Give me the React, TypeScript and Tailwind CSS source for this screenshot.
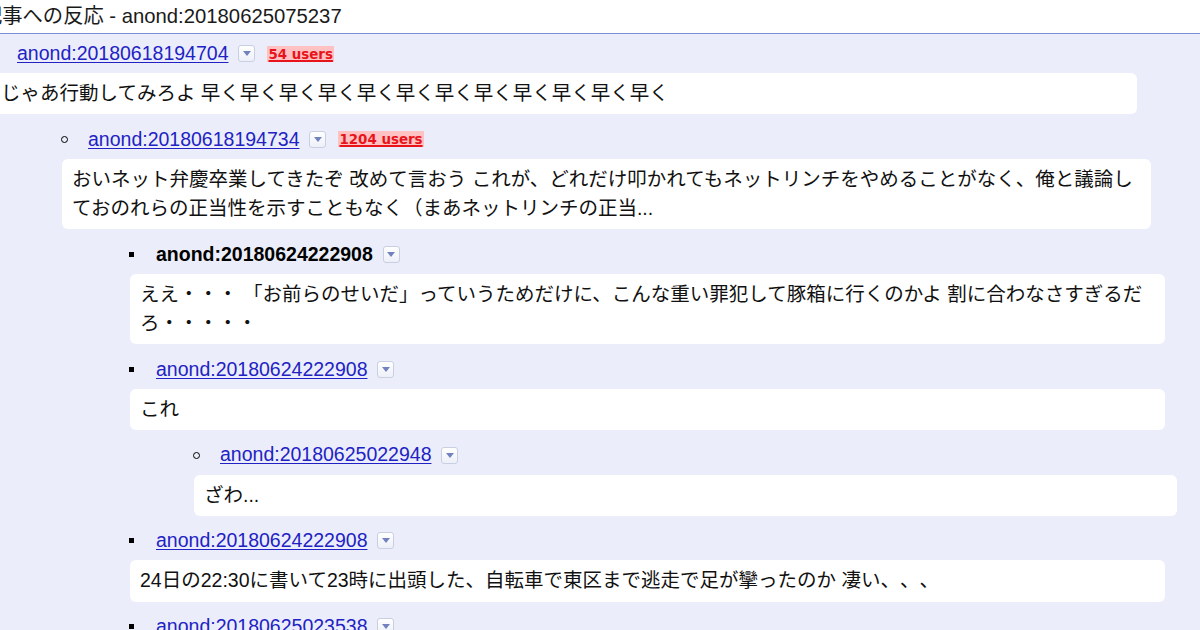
import React from "react";

type Item = {
  ml: string;
  w: string;
  bullet: "none" | "circle" | "square";
  label: string;
  bold?: boolean;
  users?: string;
  lines: string[];
};

const items: Item[] = [
  {
    ml: "ml-[-9px]",
    w: "w-[1146px]",
    bullet: "none",
    label: "anond:20180618194704",
    users: "54 users",
    lines: ["じゃあ行動してみろよ 早く早く早く早く早く早く早く早く早く早く早く早く"],
  },
  {
    ml: "ml-[62px]",
    w: "w-[1089px]",
    bullet: "circle",
    label: "anond:20180618194734",
    users: "1204 users",
    lines: [
      "おいネット弁慶卒業してきたぞ 改めて言おう これが、どれだけ叩かれてもネットリンチをやめることがなく、俺と議論し",
      "ておのれらの正当性を示すこともなく（まあネットリンチの正当...",
    ],
  },
  {
    ml: "ml-[130px]",
    w: "w-[1035px]",
    bullet: "square",
    label: "anond:20180624222908",
    bold: true,
    lines: [
      "ええ・・・ 「お前らのせいだ」っていうためだけに、こんな重い罪犯して豚箱に行くのかよ 割に合わなさすぎるだ",
      "ろ・・・・・",
    ],
  },
  {
    ml: "ml-[130px]",
    w: "w-[1035px]",
    bullet: "square",
    label: "anond:20180624222908",
    lines: ["これ"],
  },
  {
    ml: "ml-[194px]",
    w: "w-[983px]",
    bullet: "circle",
    label: "anond:20180625022948",
    lines: ["ざわ..."],
  },
  {
    ml: "ml-[130px]",
    w: "w-[1035px]",
    bullet: "square",
    label: "anond:20180624222908",
    lines: ["24日の22:30に書いて23時に出頭した、自転車で東区まで逃走で足が攣ったのか 凄い、、、"],
  },
  {
    ml: "ml-[130px]",
    w: "w-[1035px]",
    bullet: "square",
    label: "anond:20180625023538",
    lines: [],
  },
];

function DropButton() {
  return (
    <span className="ml-[10px] inline-flex h-[17px] w-[17px] shrink-0 items-center justify-center rounded-[3px] border border-[#c9cfe3] bg-gradient-to-b from-white to-[#eef0f8]">
      <svg width="8" height="5" viewBox="0 0 8 5">
        <polygon points="0,0 8,0 4,5" fill="#7282c0" />
      </svg>
    </span>
  );
}

function Bullet({ kind }: { kind: Item["bullet"] }) {
  return (
    <span className="ml-[-1px] flex w-[27px] shrink-0 items-center">
      {kind === "circle" && (
        <span className="block h-[7px] w-[7px] rounded-full border-[1.5px] border-black" />
      )}
      {kind === "square" && <span className="block h-[5px] w-[5px] bg-black" />}
    </span>
  );
}

export default function App() {
  return (
    <div className="h-[630px] w-[1200px] overflow-hidden bg-[#ebeefa] font-['Liberation_Sans','Noto_Sans_CJK_JP',sans-serif] text-[#111] [text-spacing-trim:space-all]">
      <div className="h-[34px] border-b border-[#7d90d6] bg-white">
        <div className="ml-[-18px] whitespace-nowrap text-[20.3px] leading-[33px] text-[#1a1a1a]">
          記事への反応 - anond:20180625075237
        </div>
      </div>
      <div className="pt-[5px]">
        {items.map((it, i) => (
          <div key={i} className={it.ml}>
            <div className="flex h-[29px] items-center whitespace-nowrap text-[19.5px]">
              <Bullet kind={it.bullet} />
              {it.bold ? (
                <span className="font-bold text-black">{it.label}</span>
              ) : (
                <a href="#" className="text-[#2222c4] underline decoration-[1px] underline-offset-[2px]">
                  {it.label}
                </a>
              )}
              <DropButton />
              {it.users && (
                <span className="ml-[12px] bg-[#ffc2c2] px-[1px] pt-[1px] font-['DejaVu_Sans',sans-serif] text-[13.4px] font-bold leading-[15px] text-[#e8141c] underline decoration-[1.5px]">
                  {it.users}
                </span>
              )}
            </div>
            {it.lines.length > 0 && (
              <div
                className={`${it.w} mb-[10.5px] mt-[5px] rounded-[6px] bg-white px-[10px] py-[6px] text-[19.5px] leading-[29.25px] whitespace-nowrap`}
              >
                {it.lines.map((l, j) => (
                  <div key={j}>{l}</div>
                ))}
              </div>
            )}
          </div>
        ))}
      </div>
    </div>
  );
}
